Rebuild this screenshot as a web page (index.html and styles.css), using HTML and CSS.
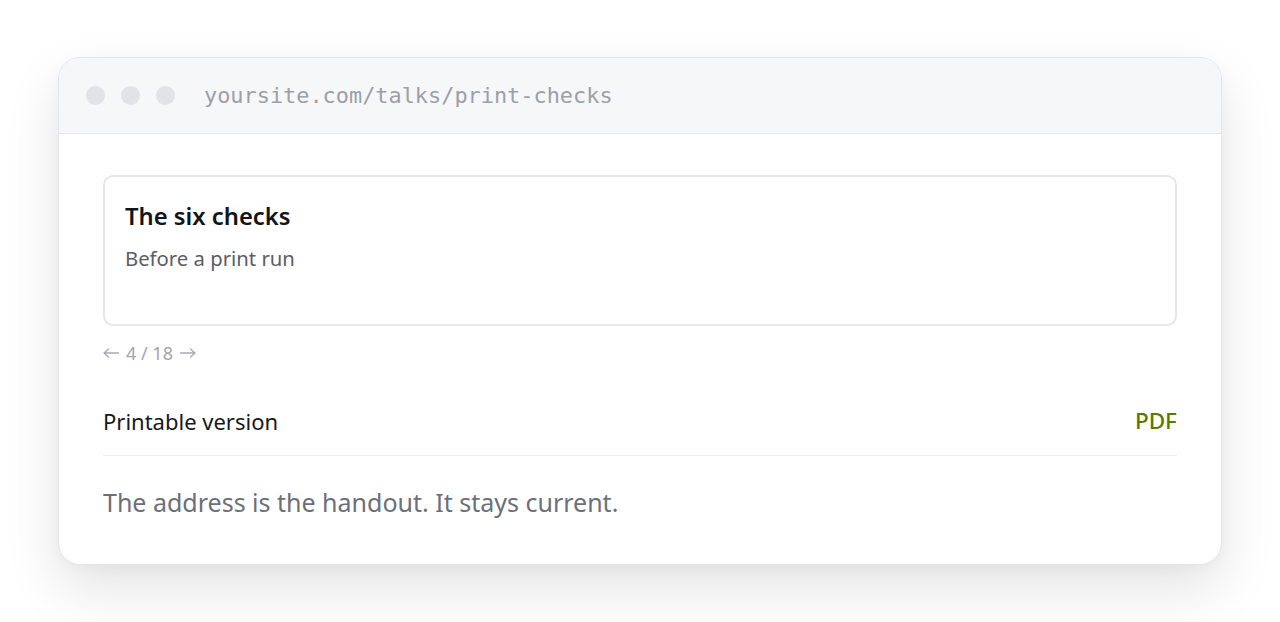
FILE: index.html
```html
<!DOCTYPE html>
<html lang="en">
<head>
<meta charset="utf-8">
<title>The six checks</title>
<link rel="stylesheet" href="styles.css">
</head>
<body>
  <div class="window">
    <div class="titlebar">
      <div class="dots"><span></span><span></span><span></span></div>
      <div class="url">yoursite.com/talks/print-checks</div>
    </div>
    <div class="content">
      <div class="slide">
        <h1 class="slide-title">The six checks</h1>
        <p class="slide-sub">Before a print run</p>
      </div>
      <div class="pager">
        <svg class="arrow" width="16" height="10" viewBox="0 0 16 10" aria-label="previous"><path d="M15.5 5H1M5.5 1L1 5l4.5 4"/></svg>
        <span class="count">4 / 18</span>
        <svg class="arrow" width="16" height="10" viewBox="0 0 16 10" aria-label="next"><path d="M0.5 5H15M10.5 1L15 5l-4.5 4"/></svg>
      </div>
      <div class="row">
        <span class="row-label">Printable version</span>
        <span class="row-link">PDF</span>
      </div>
      <p class="note">The address is the handout. It stays current.</p>
    </div>
  </div>
</body>
</html>
```
FILE: styles.css
```css
* { box-sizing: border-box; }

html {
  min-height: 100%;
  background: #ffffff;
}

body {
  margin: 0;
  min-height: 622px;
  font-family: "Noto Sans", "Open Sans", sans-serif;
  padding: 57px 58px 0 58px;
}

.window {
  width: 1164px;
  height: 508px;
  border: 1px solid #e3e5e8;
  border-radius: 22px;
  background: #ffffff;
  overflow: hidden;
  box-shadow: 0 24px 56px rgba(0, 0, 0, 0.11), 0 4px 14px rgba(0, 0, 0, 0.03);
}

.titlebar {
  height: 76px;
  background: #f6f7f8;
  border-bottom: 1px solid #e3e5e8;
  display: flex;
  align-items: center;
  padding-left: 27px;
}

.dots {
  display: flex;
  gap: 16px;
}

.dots span {
  width: 19px;
  height: 19px;
  border-radius: 50%;
  background: #e1e3e6;
}

.url {
  margin-left: 29px;
  font-family: "DejaVu Sans Mono", "Liberation Mono", monospace;
  font-size: 21.9px;
  color: #9ca0a8;
}

.content {
  padding: 41px 44px 0 44px;
}

.slide {
  height: 151px;
  border: 2px solid #e6e7e9;
  border-radius: 10px;
  padding: 23px 20px;
}

.slide-title {
  margin: 0;
  font-size: 23.8px;
  font-weight: 600;
  color: #111418;
  line-height: 32px;
}

.slide-sub {
  margin: 13px 0 0 0;
  font-size: 20.3px;
  color: #5b5e63;
  line-height: 26px;
}

.pager {
  display: flex;
  align-items: center;
  gap: 7px;
  margin-top: 14px;
  height: 26px;
  font-size: 18px;
  color: #a2a6ad;
}

.pager .arrow {
  fill: none;
  stroke: #a7abb1;
  stroke-width: 1.3;
  stroke-linecap: round;
  stroke-linejoin: round;
}

.row {
  display: flex;
  justify-content: space-between;
  align-items: center;
  margin-top: 39px;
  padding-bottom: 18px;
  border-bottom: 1px solid #eceef0;
}

.row-label {
  font-size: 22px;
  color: #16181b;
  line-height: 32px;
}

.row-link {
  font-size: 22.5px;
  font-weight: 500;
  color: #587a00;
  line-height: 32px;
}

.note {
  margin: 28px 0 0 0;
  font-size: 25px;
  color: #6b7078;
  line-height: 36px;
}
```
